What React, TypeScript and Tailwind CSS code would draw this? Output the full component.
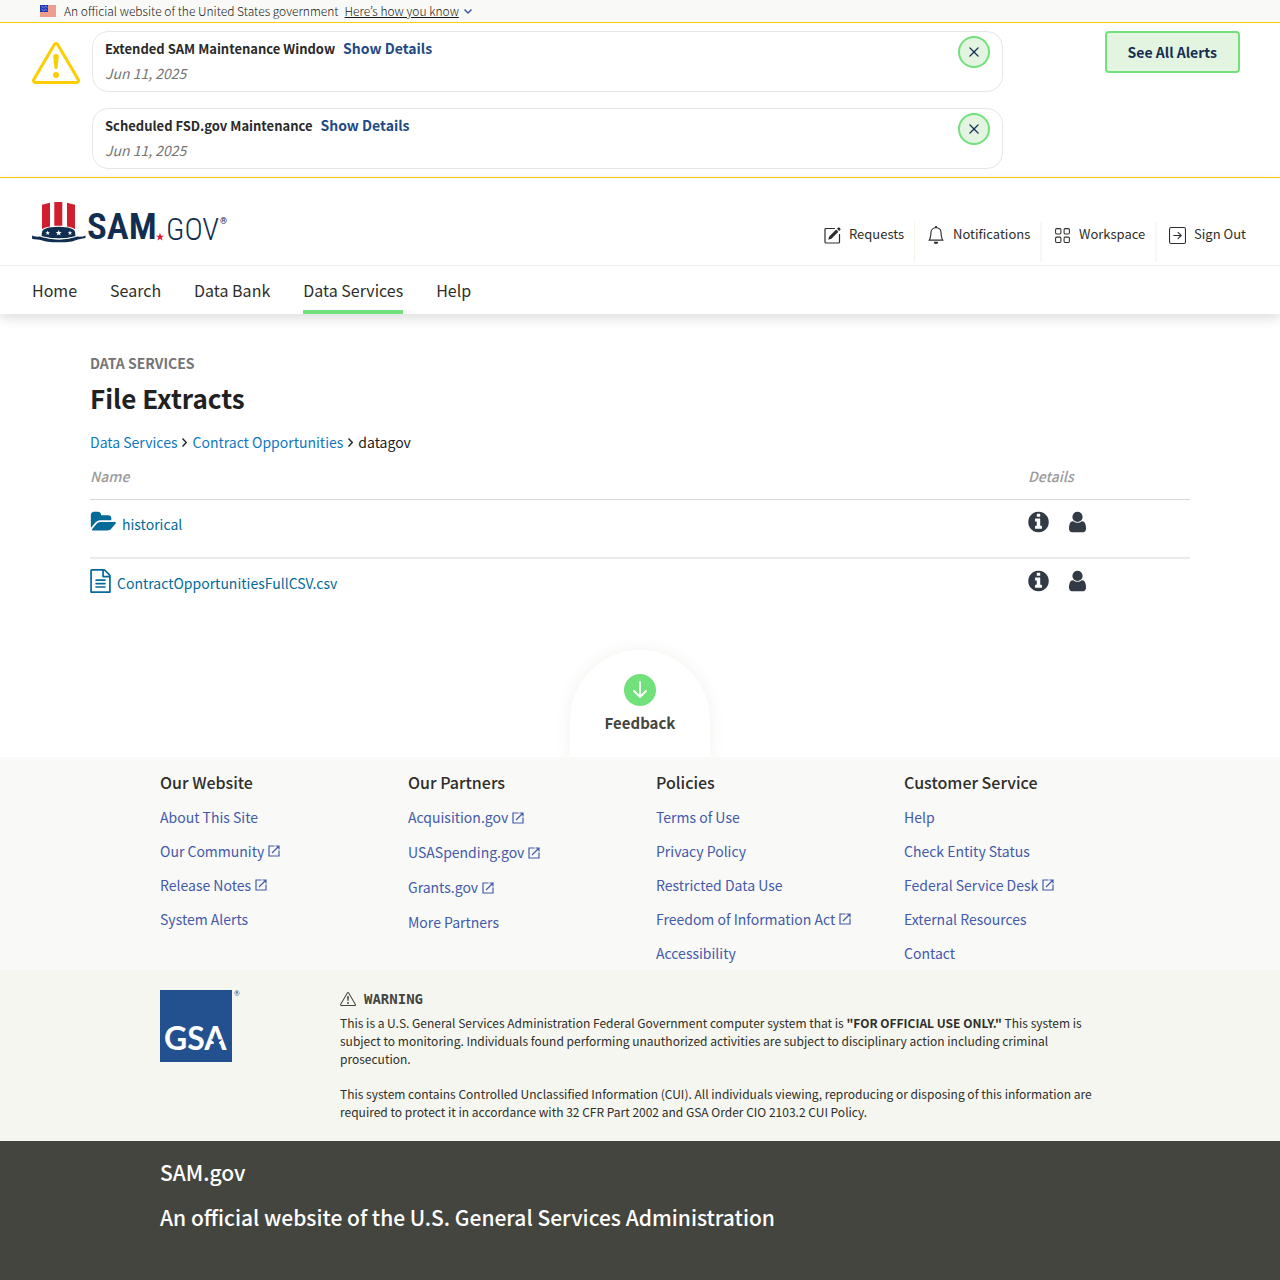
import type { ReactNode } from "react";
import { BsArrowRightSquare, BsBell, BsExclamationTriangle, BsGrid, BsX } from "react-icons/bs";

const star = "M0-2.4.6-.75 2.3-.75.95.3 1.45 1.95 0 .95-1.45 1.95-.95.3-2.3-.75-.6-.75z";

function FlagIcon() {
  return (
    <svg viewBox="0 0 16 12" className="h-3 w-4" aria-hidden="true">
      <rect width="16" height="12" fill="#ef9d8e" />
      <rect width="8" height="7" fill="#1f36b8" />
      <path d="M1 1h1v1h1v1h1V2h1V1h1v1h1v1M1 4h1v1h1v1h1V5h1V4h1v1h1v1" fill="none" stroke="#7f8fe6" strokeWidth=".6" />
    </svg>
  );
}

function SamLogo() {
  return (
    <svg viewBox="0 0 198 42" className="h-[42px] w-[198px] overflow-visible" role="img" aria-label="SAM.gov">
      <path d="M10 2.800 18 .8V24.400Q13 25.200 10 27zM22.300 0H30.300V23.800H22.300zM35 .8 43 2.800V27Q40 25.200 35 24.400z" fill="#d01f2e" />
      <path d="M10 30 Q11 25 26.5 24.8 Q42 25 43 30 L43.5 34.5 Q27 38.5 9.5 34.5z" fill="#112e51" />
      <path d="M0 33.6 Q2 35 8 34.6 Q27 40.3 45 34.6 Q51 35 53.6 33.4 L53.4 36 Q45 37.4 40 39.4 Q27 41.2 14 39.4 Q8 37.4.2 37z" fill="#112e51" />
      <path d="M8.8 34.4 Q27 39.6 44.4 34.4" fill="none" stroke="#fff" strokeWidth=".9" />
      <g fill="#fff">
        <path d={star} transform="translate(15.7 31)" />
        <path d={star} transform="translate(26.7 31) scale(1.3)" />
        <path d={star} transform="translate(38 31)" />
      </g>
      <text x="55" y="37" fontSize="37" className="fill-[#112e51] font-['Roboto_Condensed',Roboto,sans-serif] font-semibold">SAM</text>
      <path d={star} transform="translate(128 35) scale(1.8)" fill="#e31c3d" />
      <text x="134" y="38" fontSize="31" className="fill-[#112e51] font-['Roboto_Condensed',Roboto,sans-serif] font-light">GOV</text>
      <text x="188" y="22" fontSize="9" className="fill-[#112e51] font-['Roboto',sans-serif] font-bold">®</text>
    </svg>
  );
}

function GsaLogo() {
  return (
    <svg viewBox="0 0 82 72" className="h-[72px] w-[82px] overflow-visible" role="img" aria-label="GSA">
      <rect width="72" height="72" fill="#23508f" />
      <text x="4" y="60" fontSize="32" className="fill-white font-['Lato',sans-serif] font-bold">GSA</text>
      <path d={star} transform="translate(56.500 51.500) scale(2.6)" fill="#23508f" />
      <text x="74" y="6" fontSize="7" className="fill-[#23508f] font-['Lato',sans-serif]">®</text>
    </svg>
  );
}

function RequestIcon() {
  return (
    <svg viewBox="0 0 17 17" className="size-[17px]" fill="none" aria-hidden="true">
      <path d="M11 1.5H2A1 1 0 0 0 1 2.500V15A1 1 0 0 0 2 16H14.500A1 1 0 0 0 15.500 15V7" stroke="currentColor" strokeWidth="1.2" />
      <path d="M4.200 12.800 5.200 9.600 12.200 2.600 14.400 4.800 7.400 11.800zM13 1.800 14.200.6A.8.800 0 0 1 15.300.600L16.400 1.700A.8.800 0 0 1 16.400 2.800L15.200 4z" fill="currentColor" />
    </svg>
  );
}

function ExternalIcon() {
  return (
    <svg viewBox="0 0 12 12" className="size-3" fill="none" stroke="currentColor" strokeWidth="1.2" aria-hidden="true">
      <path d="M6.500 1H1V11H11V5.500M7.500 1H11V4.500M11 1 4 8" />
    </svg>
  );
}

function FolderIcon() {
  return (
    <svg viewBox="0 0 1952 1792" className="h-6 w-[26px]" fill="currentColor" aria-hidden="true">
      <path d="M1943 952q0 31-31 66l-336 396q-43 51-120.5 86.5t-143.5 35.5h-1088q-34 0-60.5-13t-26.5-43q0-31 31-66l336-396q43-51 120.5-86.5t143.5-35.5h1088q34 0 60.5 13t26.5 43zm-343-344v160h-832q-94 0-197 47.5t-164 119.5l-337 396-5 6q0-4-.5-12.5t-.5-12.5v-960q0-92 66-158t158-66h320q92 0 158 66t66 158v32h544q92 0 158 66t66 158z" />
    </svg>
  );
}

function FileIcon() {
  return (
    <svg viewBox="128 0 1536 1792" className="h-6 w-[21px]" fill="currentColor" aria-hidden="true">
      <path d="M1596 380q28 28 48 76t20 88v1152q0 40-28 68t-68 28h-1344q-40 0-68-28t-28-68v-1600q0-40 28-68t68-28h896q40 0 88 20t76 48zm-444-244v376h376q-10-29-22-41l-313-313q-12-12-41-22zm384 1528v-1024h-416q-40 0-68-28t-28-68v-416h-768v1536h1280zm-1024-864q0-14 9-23t23-9h704q14 0 23 9t9 23v64q0 14-9 23t-23 9h-704q-14 0-23-9t-9-23v-64zm736 224q14 0 23 9t9 23v64q0 14-9 23t-23 9h-704q-14 0-23-9t-9-23v-64q0-14 9-23t23-9h704zm0 256q14 0 23 9t9 23v64q0 14-9 23t-23 9h-704q-14 0-23-9t-9-23v-64q0-14 9-23t23-9h704z" />
    </svg>
  );
}

function InfoIcon() {
  return (
    <svg viewBox="128 0 1536 1792" className="h-6 w-[21px]" fill="currentColor" aria-hidden="true">
      <path d="M1152 1376v-160q0-14-9-23t-23-9h-96v-512q0-14-9-23t-23-9h-320q-14 0-23 9t-9 23v160q0 14 9 23t23 9h96v320h-96q-14 0-23 9t-9 23v160q0 14 9 23t23 9h448q14 0 23-9t9-23zm-128-896v-160q0-14-9-23t-23-9h-192q-14 0-23 9t-9 23v160q0 14 9 23t23 9h192q14 0 23-9t9-23zm640 416q0 209-103 385.5t-279.5 279.5-385.5 103-385.5-103-279.5-279.5-103-385.5 103-385.5 279.5-279.5 385.5-103 385.5 103 279.5 279.5 103 385.5z" />
    </svg>
  );
}

function UserIcon() {
  return (
    <svg viewBox="256 0 1280 1792" className="h-6 w-[17px]" fill="currentColor" aria-hidden="true">
      <path d="M1536 1399q0 109-62.5 187t-150.5 78h-854q-88 0-150.5-78t-62.5-187q0-85 8.500-160.500t31.500-152 58.500-131 94-89 134.500-34.500q131 128 313 128t313-128q76 0 134.500 34.500t94 89 58.500 131 31.500 152 8.500 160.500zm-256-887q0 159-112.500 271.500t-271.500 112.500-271.500-112.500-112.500-271.500 112.500-271.500 271.500-112.500 271.500 112.500 112.500 271.500z" />
    </svg>
  );
}

function AlertCard({ title }: { title: string }) {
  return (
    <section className="flex items-start justify-between rounded-2xl border border-[#e6e6e6] pt-1 pr-3 pb-[5px] pl-3">
      <div>
        <div className="flex gap-2">
          <h2 className="text-[13px] leading-[25px] font-bold text-[#2a2a2a]">{title}</h2>
          <a href="#details" className="text-sm leading-[25px] font-bold text-[#1f4a85]">Show Details</a>
        </div>
        <p className="text-sm leading-[25px] text-[#757575] italic">Jun 11, 2025</p>
      </div>
      <button aria-label="Dismiss alert" className="flex size-8 items-center justify-center rounded-full border-2 border-[#70e17b] bg-[#e3f5e1] text-[#162e51]">
        <BsX size={22} />
      </button>
    </section>
  );
}

function UserLink({ icon, label }: { icon: ReactNode; label: string }) {
  return (
    <a href="#account" className="flex items-start gap-2">
      <span className="flex h-[26px] items-center">{icon}</span>
      <span className="text-[13px] leading-6">{label}</span>
    </a>
  );
}

const navItems = ["Home", "Search", "Data Bank", "Data Services", "Help"];

const columns: { title: string; rows: string; links: [string, boolean?][] }[] = [
  { title: "Our Website", rows: "leading-[34px]", links: [["About This Site"], ["Our Community", true], ["Release Notes", true], ["System Alerts"]] },
  { title: "Our Partners", rows: "leading-[35px]", links: [["Acquisition.gov", true], ["USASpending.gov", true], ["Grants.gov", true], ["More Partners"]] },
  { title: "Policies", rows: "leading-[34px]", links: [["Terms of Use"], ["Privacy Policy"], ["Restricted Data Use"], ["Freedom of Information Act", true], ["Accessibility"]] },
  { title: "Customer Service", rows: "leading-[34px]", links: [["Help"], ["Check Entity Status"], ["Federal Service Desk", true], ["External Resources"], ["Contact"]] },
];

function FileRow({ icon, name }: { icon: ReactNode; name: string }) {
  return (
    <tr className="border-b-2 border-[#ebebeb] last:border-b-0">
      <td className="pt-2.5 pb-[23px]">
        <a href="#file" className="flex items-end gap-1.5 text-sm leading-5 text-[#046b99]">
          {icon}
          {name}
        </a>
      </td>
      <td className="pt-2.5 pb-[23px]">
        <div className="flex gap-5 text-[#323a45]">
          <button aria-label={`Information about ${name}`}><InfoIcon /></button>
          <button aria-label={`Access to ${name}`}><UserIcon /></button>
        </div>
      </td>
    </tr>
  );
}

function Chevron() {
  return (
    <svg viewBox="0 0 5 9" className="h-[9px] w-[5px]" fill="none" stroke="currentColor" strokeWidth="1.400" aria-hidden="true">
      <path d="M.5.500 4.300 4.500.5 8.500" />
    </svg>
  );
}

export default function App() {
  return (
    <div className="flex min-h-screen flex-col bg-white font-['Noto_Sans_CJK_KR','Noto_Sans_CJK_SC',sans-serif] text-[#2e2e2a]">
      <div className="flex h-[22px] items-center bg-[#f9f9f7] px-10 text-xs font-light text-[#1b1b1b]">
        <FlagIcon />
        <p className="ml-2">An official website of the United States government</p>
        <button className="ml-1.5 flex items-center gap-1">
          <span className="underline">Here’s how you know</span>
          <svg viewBox="0 0 10 10" className="size-2.5" fill="none" stroke="#3f57a6" strokeWidth="1.500" aria-hidden="true"><path d="M1.500 3.500 5 7 8.500 3.500" /></svg>
        </button>
      </div>

      <div className="flex items-start border-y border-[#face00] px-8 py-2">
        <BsExclamationTriangle size={48} className="mt-2 shrink-0 text-[#face00]" />
        <div className="ml-3 flex flex-1 flex-col gap-4">
          <AlertCard title="Extended SAM Maintenance Window" />
          <AlertCard title="Scheduled FSD.gov Maintenance" />
        </div>
        <div className="flex w-[245px] justify-end pr-2">
          <button className="h-[42px] rounded border-2 border-[#70e17b] bg-[#e3f5e1] px-[21px] text-sm font-bold text-[#162e51]">See All Alerts</button>
        </div>
      </div>

      <header className="shadow-[0_4px_12px_rgba(0,0,0,0.14)]">
        <div className="flex h-[88px] justify-between border-b border-[#f0f0f0] px-8">
          <a href="#home" className="mt-6 self-start"><SamLogo /></a>
          <ul className="mt-11 flex">
            <li className="h-10 w-[91px] border-r border-[#f5f3ec]">
              <UserLink icon={<RequestIcon />} label="Requests" />
            </li>
            <li className="h-10 w-[127px] border-r-2 border-[#f7f7f7] pl-3">
              <UserLink icon={<BsBell size={18} />} label="Notifications" />
            </li>
            <li className="h-10 w-[115px] border-r-2 border-[#f7f7f7] pl-3">
              <UserLink icon={<BsGrid size={17} />} label="Workspace" />
            </li>
            <li className="h-10 w-[91px] pl-3">
              <UserLink icon={<BsArrowRightSquare size={17} />} label="Sign Out" />
            </li>
          </ul>
        </div>
        <nav className="flex h-12 gap-[33px] px-8">
          {navItems.map((item) => (
            <a key={item} href="#nav" className={item === "Data Services" ? "border-b-4 border-[#70e17b] text-base leading-[48px]" : "text-base leading-[48px]"}>
              {item}
            </a>
          ))}
        </nav>
      </header>

      <main className="mx-auto w-full max-w-[1100px] pt-9">
        <p className="text-sm leading-[26px] font-bold text-[#757575]">DATA SERVICES</p>
        <h1 className="text-[26px] leading-[44px] font-bold text-[#212121]">File Extracts</h1>
        <nav className="mt-2.5 flex items-center gap-[5px] text-sm leading-6 text-[#212121]">
          <a href="#data-services" className="text-[#0f78bf]">Data Services</a>
          <Chevron />
          <a href="#contract" className="text-[#0f78bf]">Contract Opportunities</a>
          <Chevron />
          <span>datagov</span>
        </nav>
        <table className="mt-2.5 w-full table-fixed border-collapse">
          <thead>
            <tr className="border-b border-[#d6d7d9] text-left text-sm leading-6 text-[#9b9b9b] italic">
              <th className="pb-[11px] font-medium">Name</th>
              <th className="w-[162px] pb-[11px] font-medium">Details</th>
            </tr>
          </thead>
          <tbody>
            <FileRow icon={<FolderIcon />} name="historical" />
            <FileRow icon={<FileIcon />} name="ContractOpportunitiesFullCSV.csv" />
          </tbody>
        </table>
      </main>

      <div className="mt-[34px] flex justify-center">
        <button className="flex h-[107px] w-[140px] flex-col items-center rounded-t-full bg-white pt-6 shadow-[0_0_16px_rgba(69,69,30,0.08)]">
          <span className="flex size-8 items-center justify-center rounded-full bg-[#70e17b]">
            <svg viewBox="0 0 16 18" className="h-[18px] w-4" fill="none" stroke="#fff" strokeWidth="1.800" strokeLinecap="round" strokeLinejoin="round" aria-hidden="true"><path d="M8 1V16M2 10 8 16 14 10" /></svg>
          </span>
          <span className="mt-[5px] text-[15px] leading-6 font-bold text-[#454540]">Feedback</span>
        </button>
      </div>

      <footer className="relative flex flex-1 flex-col">
        <div className="bg-[#f9f9f7]">
          <div className="mx-auto grid w-full max-w-[960px] grid-cols-4 gap-8 pt-3">
            {columns.map((col) => (
              <section key={col.title}>
                <h2 className="mb-[5px] text-base leading-[26px] font-medium text-[#2e2e2a]">{col.title}</h2>
                <ul>
                  {col.links.map(([label, external]) => (
                    <li key={label} className="flex text-sm">
                      <a href="#link" className={`flex items-center gap-1 whitespace-nowrap text-[#435aab] ${col.rows}`}>
                        {label}
                        {external && <ExternalIcon />}
                      </a>
                    </li>
                  ))}
                </ul>
              </section>
            ))}
          </div>
        </div>

        <div className="bg-[#f5f6f0]">
          <div className="mx-auto flex w-full max-w-[960px] items-start pt-5 pb-5">
            <div className="w-[180px] shrink-0"><GsaLogo /></div>
            <div className="flex-1 pr-2 text-xs leading-[18px]">
              <h2 className="flex items-center gap-2 pb-1.5 font-['DejaVu_Sans_Mono',monospace] text-sm leading-[18px] font-bold text-[#454540]">
                <BsExclamationTriangle size={16} />
                WARNING
              </h2>
              <p>
                This is a U.S. General Services Administration Federal Government computer system that is <b>"FOR OFFICIAL USE ONLY."</b> This system is subject to monitoring. Individuals found performing unauthorized activities are subject to disciplinary action including criminal prosecution.
              </p>
              <p className="mt-[17px]">
                This system contains Controlled Unclassified Information (CUI). All individuals viewing, reproducing or disposing of this information are required to protect it in accordance with 32 CFR Part 2002 and GSA Order CIO 2103.2 CUI Policy.
              </p>
            </div>
          </div>
        </div>

        <div className="flex-1 bg-[#454540] pt-[13px] pb-5 text-white">
          <div className="mx-auto w-full max-w-[960px] text-[21px] leading-[37px] font-medium">
            <p>SAM.gov</p>
            <p className="mt-2">An official website of the U.S. General Services Administration</p>
          </div>
        </div>
      </footer>
    </div>
  );
}
